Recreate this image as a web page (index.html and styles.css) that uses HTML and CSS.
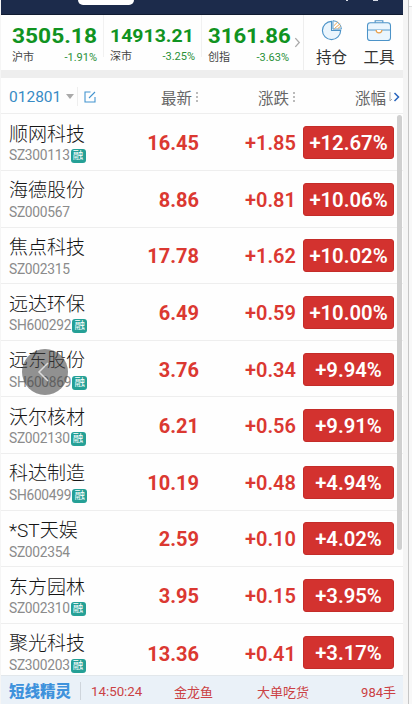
FILE: index.html
```html
<!DOCTYPE html>
<html lang="zh-CN">
<head>
<meta charset="utf-8">
<title>行情</title>
<link rel="stylesheet" href="styles.css">
</head>
<body>
<div class="page">
<main class="phone">
  <header class="topbar"><span class="tab"></span><i class="mark m1"></i><i class="mark m2"></i></header>
  <section class="indices">
    <div class="index i1"><b><span>3505.18</span></b><p><span>沪市</span><em>-1.91%</em></p></div>
    <div class="index i2"><b><span>14913.21</span></b><p><span>深市</span><em>-3.25%</em></p></div>
    <div class="index i3"><b><span>3161.86</span></b><p><span>创指</span><em>-3.63%</em></p></div>
    <svg class="more" viewBox="0 0 8 12"><path d="M1.500 1 6 6l-4.500 5" fill="none" stroke="#aaa" stroke-width="1.500"/></svg>
    <div class="tool t1">
      <svg viewBox="0 0 24 24"><path d="M11.500 2.500a9.500 9.500 0 1 0 9.500 9.500h-9.500z" fill="#eaf5fd" stroke="#4c93c8" stroke-width="1.200"/><path d="M13 1.800v8.700h8.800A9 9 0 0 0 13 1.800z" fill="#fff" stroke="#4c93c8"/><path d="m14 7 4-4M14.500 10l6-5M18 10l3-2.500" stroke="#e9a04b" fill="none"/></svg>
      <span>持仓</span>
    </div>
    <div class="tool t2">
      <svg viewBox="0 0 26 24"><path d="M9 4V1.800h8V4" fill="none" stroke="#4c93c8" stroke-width="1.200"/><rect x="1" y="4" width="24" height="18.500" rx="3" fill="#eaf5fd" stroke="#4c93c8" stroke-width="1.100"/><path d="M1 11.500h24" stroke="#4c93c8"/><path d="M10 11.500a3 3 0 0 0 6 0" fill="#fff" stroke="#e9a04b" stroke-width="1.300"/></svg>
      <span>工具</span>
    </div>
  </section>
  <section class="columns">
    <span class="account">012801</span><i class="caret"></i><i class="rule"></i>
    <svg class="edit" viewBox="0 0 12 12"><path d="M6.500 1H1v10h10V6M5 7l6-6" fill="none" stroke="#4394cf" stroke-width="1.100"/></svg>
    <span class="col c1">最新</span><i class="dots"></i>
    <span class="col c2">涨跌</span><i class="dots"></i>
    <span class="col c3">涨幅</span>
    <svg class="next" viewBox="0 0 12 12"><path d="M2 1v9l2-2" fill="none" stroke="#aaa"/><path d="m6.500 2 4 4-4 4" fill="none" stroke="#2864bd" stroke-width="1.500"/></svg>
  </section>
  <section class="list">
    <div class="row"><div class="name"><h2>顺网科技</h2><p>SZ300113<i>融</i></p></div><b>16.45</b><b class="chg">+1.85</b><strong>+12.67%</strong></div>
    <div class="row"><div class="name"><h2>海德股份</h2><p>SZ000567</p></div><b>8.86</b><b class="chg">+0.81</b><strong>+10.06%</strong></div>
    <div class="row"><div class="name"><h2>焦点科技</h2><p>SZ002315</p></div><b>17.78</b><b class="chg">+1.62</b><strong>+10.02%</strong></div>
    <div class="row"><div class="name"><h2>远达环保</h2><p>SH600292<i>融</i></p></div><b>6.49</b><b class="chg">+0.59</b><strong>+10.00%</strong></div>
    <div class="row"><div class="name"><h2>远东股份</h2><p>SH600869<i>融</i></p></div><b>3.76</b><b class="chg">+0.34</b><strong>+9.94%</strong></div>
    <div class="row"><div class="name"><h2>沃尔核材</h2><p>SZ002130<i>融</i></p></div><b>6.21</b><b class="chg">+0.56</b><strong>+9.91%</strong></div>
    <div class="row"><div class="name"><h2>科达制造</h2><p>SH600499<i>融</i></p></div><b>10.19</b><b class="chg">+0.48</b><strong>+4.94%</strong></div>
    <div class="row"><div class="name"><h2>*ST天娱</h2><p>SZ002354</p></div><b>2.59</b><b class="chg">+0.10</b><strong>+4.02%</strong></div>
    <div class="row"><div class="name"><h2>东方园林</h2><p>SZ002310<i>融</i></p></div><b>3.95</b><b class="chg">+0.15</b><strong>+3.95%</strong></div>
    <div class="row"><div class="name"><h2>聚光科技</h2><p>SZ300203<i>融</i></p></div><b>13.36</b><b class="chg">+0.41</b><strong>+3.17%</strong></div>
    <div class="thumb"></div>
    <div class="back"><svg viewBox="0 0 46 46"><path d="m26 14-9 9 9 9" fill="none" stroke="#ddd" stroke-width="1.500"/></svg></div>
  </section>
  <footer class="ticker"><strong>短线精灵</strong><i></i><span class="time">14:50:24</span><span class="stock">金龙鱼</span><span class="event">大单吃货</span><span class="lots">984手</span></footer>
</main>
<aside class="gutter"></aside>
</div>
</body>
</html>
```
FILE: styles.css
```css
* { box-sizing: border-box; margin: 0; padding: 0; }
body { width: 412px; height: 704px; overflow: hidden; background: #f5f5f5; font-family: Roboto, "Noto Sans CJK SC", sans-serif; }
i, em { font-style: normal; }
svg { display: block; flex: none; }
.page { display: flex; height: 704px; padding-left: 1px; }
.phone { width: 402px; height: 704px; background: #fefefe; display: flex; flex-direction: column; overflow: hidden; }
.gutter { width: 4px; margin-left: 5px; border-left: 1px solid #c6c6c6; background: linear-gradient(#fff 6px, #ddd 6px, #ddd 7px, #f8f8f8 7px); }
.topbar { height: 15px; flex: none; background: #1c2b4b; border-bottom: 1px solid #101b31; position: relative; display: flex; }
.tab { width: 56px; height: 5px; margin-left: 77px; background: #fff; border-radius: 0 0 9px 9px; }
.mark { position: absolute; top: 0; height: 1px; background: #d6dbe5; }
.m1 { left: 345px; width: 2px; }
.m2 { left: 372px; width: 5px; }

.indices { height: 55px; flex: none; display: flex; }
.index { height: 42px; padding-top: 11px; border-right: 1px solid #f1f1f1; white-space: nowrap; }
.index b { display: block; height: 21px; line-height: 21px; color: #109321; font-weight: 700; font-size: 20.500px; }
.index b span { display: inline-block; transform-origin: left; }
.index p { display: flex; justify-content: space-between; height: 20px; line-height: 21px; font-size: 11px; color: #444; }
.index em { color: #299038; }
.i1 { width: 103px; padding-left: 11px; padding-right: 6px; }
.i1 b span { transform: scaleX(1.110); }
.i2 { width: 98px; padding-left: 6px; padding-right: 6px; }
.i2 b { font-size: 19px; line-height: 20px; }
.i2 b span { transform: scaleX(1.025); }
.i2 p { line-height: 19px; }
.i3 { width: 87px; padding-left: 6px; border: 0; }
.i3 b span { transform: scaleX(1.080); }
.more { width: 7px; height: 13px; margin: 21px 2px 0 5px; }
.tool { display: flex; flex-direction: column; align-items: center; flex: none; font-size: 15.500px; color: #333; padding-top: 4px; }
.tool svg { height: 23px; width: 24px; }
.tool span { line-height: 24px; margin-top: 4px; }
.t1 { width: 51px; border-left: 1px solid #eee; padding-left: 5px; }
.t2 { width: 49px; padding-left: 1px; }
.t2 svg { width: 26px; }

.columns { height: 44.400px; flex: none; border-top: 8px solid #eee; border-bottom: 1px solid #eee; display: flex; align-items: center; padding: 2px 0 0 8px; color: #666; font-size: 15.500px; white-space: nowrap; }
.account { width: 57px; color: #388bc5; font-size: 15.500px; }
.caret { border: 4px solid transparent; border-top: 5px solid #aaa; border-bottom: 0; }
.rule { width: 1px; height: 19px; background: #eee; margin: 0 6px 0 3px; }
.edit { width: 12px; height: 12px; }
.c1 { margin-left: 65px; }
.dots { width: 2px; height: 10px; margin-left: 4px; background: repeating-linear-gradient(#bbb 0 2px, transparent 2px 4px); }
.c2 { margin-left: 60px; }
.c3 { margin-left: 60px; }
.next { width: 12px; height: 14px; margin-left: 2px; }

.list { height: 560.600px; flex: none; position: relative; }
.row { height: 56.600px; border-bottom: 1px solid #eee; display: grid; grid-template-columns: 110px 80px 104px 91px; padding: 1px 0 0 8px; align-items: center; color: #db3831; }
.row > b { padding-top: 1px; }
.row:nth-child(10) { height: 51.200px; border: 0; align-items: start; }
.row:nth-child(10) > b { margin-top: 16px; }
.row:nth-child(10) > strong { margin-top: 11px; }
.name { align-self: start; padding-top: 5.500px; white-space: nowrap; }
.name h2 { font-size: 19px; font-weight: 300; line-height: 27px; height: 27px; color: #151515; }
.name p { display: flex; align-items: center; height: 16px; line-height: 17px; font-size: 13.800px; letter-spacing: -.3px; color: #8b8b8b; }
.name i { width: 15px; height: 14px; margin: 1px 0 0 1px; background: #25a096; color: #fff; border-radius: 3px; font-size: 10.500px; letter-spacing: 0; line-height: 14px; text-align: center; }
.row > b { font-size: 20px; line-height: 24px; text-align: right; font-weight: 700; }
.row .chg { text-align: left; padding-left: 46px; font-weight: 600; }
.row strong { height: 33px; background: #d3322f; border: 1px solid #c42c29; border-radius: 3px; color: #fff; font-size: 20.300px; line-height: 33px; font-weight: 600; text-align: center; }
.thumb { position: absolute; right: 1px; top: 1px; width: 5px; height: 435px; background: #d0d0d0; border-radius: 3px; }
.back { position: absolute; left: 21px; top: 235px; width: 46px; height: 46px; border-radius: 50%; background: rgba(65,65,65,.58); }

.ticker { height: 29px; flex: none; background: #eaf1f8; border-top: 1px solid #e2e7eb; display: flex; align-items: center; padding: 3px 7px 0 8px; color: #cb4144; font-size: 13px; white-space: nowrap; }
.ticker strong { width: 64px; color: #3e92dc; font-size: 15.500px; font-weight: 900; margin-top: -2px; }
.ticker i { width: 1px; height: 18px; margin: 0 10px 0 7px; background: #cfd5dc; }
.time { width: 83px; font-size: 13.300px; }
.stock { width: 83px; }
.event { flex: 1; }
```
